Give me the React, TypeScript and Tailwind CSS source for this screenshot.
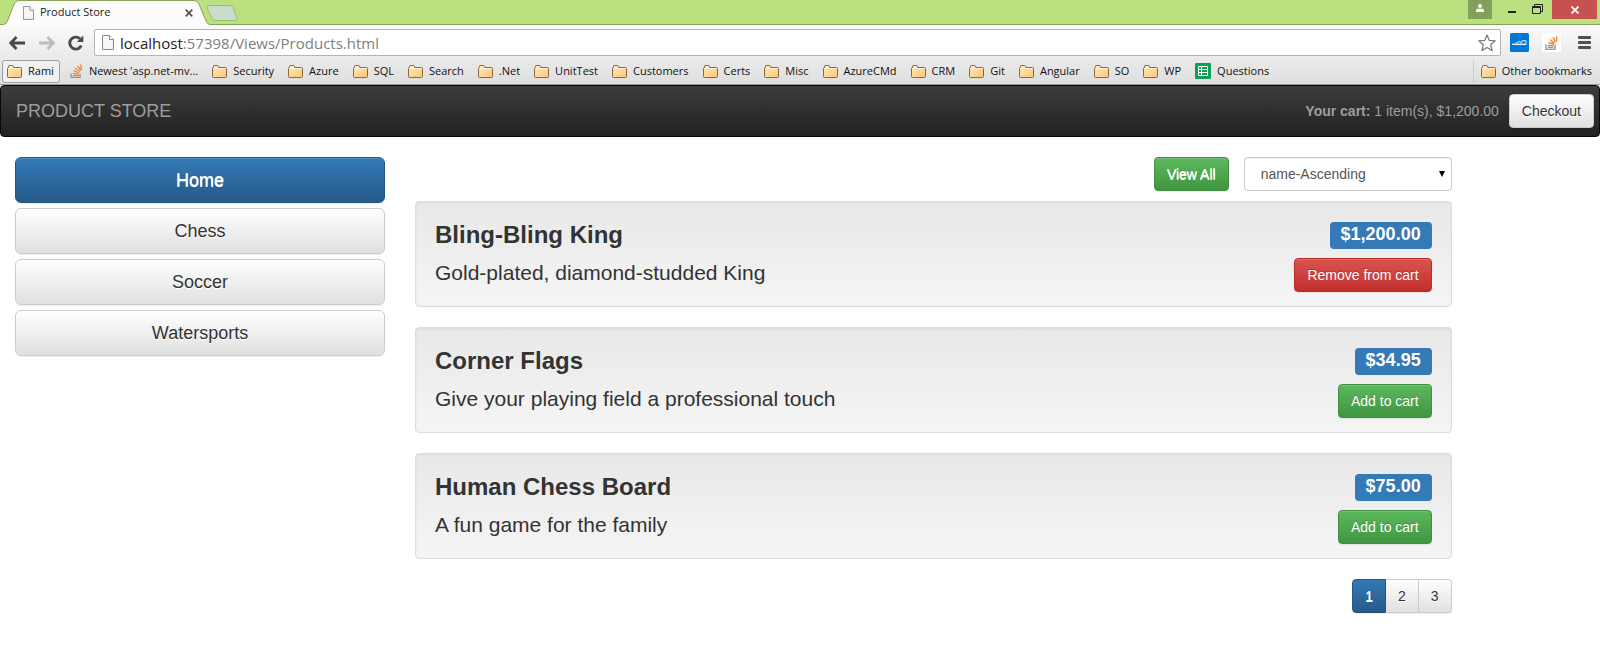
import type { ReactNode } from "react";

const folders = [
  "Security", "Azure", "SQL", "Search", ".Net", "UnitTest", "Customers", "Certs", "Misc",
  "AzureCMd", "CRM", "Git", "Angular", "SO", "WP",
];

const categories = ["Home", "Chess", "Soccer", "Watersports"];

const products = [
  { name: "Bling-Bling King", description: "Gold-plated, diamond-studded King", price: "$1,200.00", inCart: true },
  { name: "Corner Flags", description: "Give your playing field a professional touch", price: "$34.95", inCart: false },
  { name: "Human Chess Board", description: "A fun game for the family", price: "$75.00", inCart: false },
];

const raised = "shadow-[inset_0_1px_0_rgba(255,255,255,0.15),0_1px_1px_rgba(0,0,0,0.075)]";
const whiteShadow = "[text-shadow:0_1px_0_#fff]";
const darkShadow = "[text-shadow:0_-1px_0_rgba(0,0,0,0.2)]";
const neutral = `border-[#ccc] bg-linear-to-b from-white to-[#e0e0e0] text-[#333] ${whiteShadow}`;
const primary = `border-[#245580] bg-linear-to-b from-[#337ab7] to-[#265a88] text-white ${whiteShadow}`;
const success = "border-[#3e8f3e] bg-linear-to-b from-[#5cb85c] to-[#419641] text-white";
const danger = "border-[#b92c28] bg-linear-to-b from-[#d9534f] to-[#c12e2a] text-white";
const button = `h-[34px] shrink-0 rounded border px-3 text-sm leading-5 ${raised}`;

function PageIcon({ className }: { className: string }) {
  return (
    <svg viewBox="0 0 12 15" className={className} aria-hidden="true">
      <path d="M.5.5h7l4 4v10H.5z" fill="#f6f6f6" stroke="#8a8a8a" />
      <path d="M7.5.5v4h4" fill="#fff" stroke="#8a8a8a" />
    </svg>
  );
}

function FolderIcon() {
  return (
    <svg viewBox="0 0 15 13" className="h-[13px] w-[15px] shrink-0" aria-hidden="true">
      <defs>
        <linearGradient id="folder" x1="0" y1="0" x2="1" y2="1">
          <stop offset="0" stopColor="#ffebbd" />
          <stop offset="1" stopColor="#fcc673" />
        </linearGradient>
      </defs>
      <path d="M1.5 2.5V1.2Q1.5.5 2.2.5H5.6Q6.3.5 6.5 1.2L6.8 2.5H13.5Q14.5 2.5 14.5 3.5V11.5Q14.5 12.5 13.5 12.5H1.5Q.5 12.5.5 11.5V3.5Q.5 2.5 1.5 2.5Z" fill="url(#folder)" stroke="#8a6642" />
      <path d="M1.5 3.5H13.5" stroke="#fff4d8" />
    </svg>
  );
}

function StackIcon({ className }: { className: string }) {
  return (
    <svg viewBox="0 0 13 14" className={className} fill="none" aria-hidden="true">
      <path d="M1 9.500v4h9v-4" stroke="#919498" strokeWidth="1.300" />
      <g stroke="#f0802a" strokeWidth="1.200">
        <path d="M2.700 11.600H8.600M2.800 9.400l5.800.7M3.400 6.800l5.600 1.900M5 4.200l5 3.300M7.500 1.800l3.400 4.600M10.600.3l1 5.500" />
      </g>
    </svg>
  );
}

function SheetIcon() {
  return (
    <svg viewBox="0 0 16 16" className="size-4 shrink-0" aria-hidden="true">
      <rect width="16" height="16" rx="1" fill="#0f9d58" />
      <path d="M3.500 3.500h9v9h-9zM3.500 6.500h9M3.500 9.500h9M6.500 3.500v9" fill="none" stroke="#fff" />
    </svg>
  );
}

function Bookmark({ icon, children }: { icon: ReactNode; children: ReactNode }) {
  return (
    <a href="#" className="flex shrink-0 items-center gap-[6px] whitespace-nowrap">
      {icon}
      {children}
    </a>
  );
}

function TabStrip() {
  return (
    <div className="flex h-[25px] items-start border-b border-[#87a35a] bg-[#bbe07f]">
      <div className="relative h-[25px] w-[210px] shrink-0">
        <svg viewBox="0 0 210 25" className="absolute inset-0 h-[25px] w-[210px]" aria-hidden="true">
          <path d="M0 25V24.5H3Q6 24.500 7.500 21L14 4Q15.500.5 19 .5H194Q197.500.5 199 4L206 21Q207.500 24.500 210 24.500V25Z" fill="#fcfcfc" />
          <path d="M0 24.500H3Q6 24.500 7.500 21L14 4Q15.500.5 19 .5H194Q197.500.5 199 4L206 21Q207.500 24.500 210 24.500" fill="none" stroke="#87a35a" />
        </svg>
        <div className="relative flex h-[25px] items-center pr-[17px] pl-[23px] text-[11px] text-[#222]">
          <PageIcon className="h-[14px] w-[11px]" />
          <span className="ml-[6px]">Product Store</span>
          <button aria-label="Close tab" className="ml-auto">
            <svg viewBox="0 0 8 8" className="size-2" stroke="#555" strokeWidth="1.800" aria-hidden="true">
              <path d="M.7.7l6.600 6.600M7.300.7L.7 7.300" />
            </svg>
          </button>
        </div>
      </div>
      <button aria-label="New tab" className="-ml-1 pt-[5px]">
        <svg viewBox="0 0 32 16" className="h-4 w-8" aria-hidden="true">
          <path d="M2.500.5H24Q26 .5 27 2.500L31 13Q31.500 15.500 29.500 15.500H9Q7 15.500 6 13.500L1 2.500Q.6.5 2.500.5Z" fill="#cbdccb" stroke="#9bbd78" />
        </svg>
      </button>
      <div className="ml-auto flex h-[19px] items-stretch pr-[3px]">
        <button aria-label="User" className="flex w-6 justify-center bg-[#839f5a] pt-1">
          <svg viewBox="0 0 8 8" className="size-2" fill="#fff" aria-hidden="true">
            <circle cx="4" cy="2" r="2" />
            <path d="M0 8V6.500Q0 4.700 2 4.700H6Q8 4.700 8 6.500V8Z" />
          </svg>
        </button>
        <button aria-label="Minimize" className="flex w-10 items-end justify-center pb-[6px]">
          <span className="h-[2px] w-2 bg-[#222]" />
        </button>
        <button aria-label="Restore" className="flex w-5 justify-end pt-1">
          <svg viewBox="0 0 11 10" className="mr-[9px] h-[10px] w-[11px] shrink-0" fill="none" stroke="#222" aria-hidden="true">
            <path d="M2.500 2V.5H10.500V7.500H9" />
            <path d="M.5 2.500H8.500V9.500H.5Z" />
            <path d="M.5 3.500H8.500" />
          </svg>
        </button>
        <button aria-label="Close" className="flex w-[45px] items-center justify-center bg-[#c75050]">
          <svg viewBox="0 0 8 8" className="size-2" stroke="#fff" strokeWidth="1.700" aria-hidden="true">
            <path d="M.5.5l7 7M7.500.5l-7 7" />
          </svg>
        </button>
      </div>
    </div>
  );
}

function Toolbar() {
  return (
    <div className="flex items-center px-[9px] py-1">
      <button aria-label="Back">
        <svg viewBox="0 0 16 14" className="h-[14px] w-4" fill="none" stroke="#4a4a4a" strokeWidth="2.800" aria-hidden="true">
          <path d="M7.500 1L1.800 7l5.700 6M2 7H16" />
        </svg>
      </button>
      <button aria-label="Forward" className="ml-[14px]">
        <svg viewBox="0 0 16 14" className="h-[14px] w-4" fill="none" stroke="#bdbdbd" strokeWidth="2.800" aria-hidden="true">
          <path d="M8.500 1l5.700 6-5.700 6M0 7H14" />
        </svg>
      </button>
      <button aria-label="Reload" className="ml-[13px]">
        <svg viewBox="0 0 16 16" className="size-4" fill="none" aria-hidden="true">
          <path d="M13.300 10.500A6 6 0 1 1 12 3.800" stroke="#4a4a4a" strokeWidth="2.900" />
          <path d="M15.300 .6V7H8.800Z" fill="#4a4a4a" />
        </svg>
      </button>
      <div className="ml-[10px] flex h-[27px] grow items-center rounded-[2px] border border-[#b4b4b4] bg-white pr-1 pl-[7px]">
        <PageIcon className="h-[15px] w-3 shrink-0" />
        <div className="ml-[6px] grow text-[15px] leading-5 text-[#808080]">
          <span className="text-[#222]">localhost</span>:57398/Views/Products.html
        </div>
        <button aria-label="Bookmark this page">
          <svg viewBox="0 0 18 18" className="size-[18px]" fill="#fff" stroke="#777" strokeWidth="1.200" strokeLinejoin="round" aria-hidden="true">
            <path d="M9 1l2.300 5.400 5.900.5-4.500 3.900 1.400 5.800L9 13.500l-5.100 3.100 1.400-5.800L.8 6.900l5.900-.5Z" />
          </svg>
        </button>
      </div>
      <button aria-label="Azure extension" className="ml-[9px]">
        <svg viewBox="0 0 19 19" className="size-[19px]" fill="none" aria-hidden="true">
          <rect width="19" height="19" rx="1.500" fill="#0078d7" />
          <path d="M2 11.300H16.500" stroke="#e6f2fc" strokeWidth="1.500" />
          <path d="M6 10L10 8.300M10 10L13 7.700H15.500L16.300 10.500" stroke="#b5d8f5" strokeWidth="1.200" />
        </svg>
      </button>
      <button aria-label="Stack extension" className="ml-[13px] flex size-[19px] items-center justify-center bg-white">
        <svg viewBox="0 0 13 14" className="h-[14px] w-[13px]" fill="none" aria-hidden="true">
          <path d="M1 8.500v5h9v-5" stroke="#999" strokeWidth="1.500" />
          <path d="M2.800 11.500H8.500M2.800 9.500H8.500" stroke="#999" strokeWidth="1.300" />
          <path d="M3.500 6.500l5.500 1.700M5 3.500l4.500 3.700M8 1.200l2.500 5M11.600.5V5.500" stroke="#ee8223" strokeWidth="1.400" />
        </svg>
      </button>
      <button aria-label="Menu" className="ml-[17px] flex w-[13px] flex-col gap-[2px]">
        <span className="h-[3px] w-full rounded-[1px] bg-[#505050]" />
        <span className="h-[3px] w-full rounded-[1px] bg-[#505050]" />
        <span className="h-[3px] w-full rounded-[1px] bg-[#505050]" />
      </button>
    </div>
  );
}

function BookmarksBar() {
  return (
    <div className="flex h-6 items-center pr-2 pb-[2px] pl-[2px] text-[11px] text-[#111]">
      <div className="mr-[10px] flex h-[23px] items-center rounded-[3px] border border-[#a0a0a0] bg-[#f0f0f0] pr-[5px] pl-1">
        <Bookmark icon={<FolderIcon />}>Rami</Bookmark>
      </div>
      <div className="flex items-center gap-[14px]">
        <Bookmark icon={<StackIcon className="h-[14px] w-[13px]" />}>Newest &apos;asp.net-mv...</Bookmark>
        {folders.map((name) => (
          <Bookmark key={name} icon={<FolderIcon />}>{name}</Bookmark>
        ))}
        <Bookmark icon={<SheetIcon />}>Questions</Bookmark>
      </div>
      <div className="ml-auto flex h-[22px] items-center border-l border-[#c3cdd8] pl-[7px]">
        <Bookmark icon={<FolderIcon />}>Other bookmarks</Bookmark>
      </div>
    </div>
  );
}

export default function App() {
  return (
    <div className="min-h-screen bg-white font-['Liberation_Sans',Arial,sans-serif] text-[#333]">
      <div className="border-b border-[#9a9a9a] bg-[#dfdfdf] font-['Open_Sans',sans-serif]">
        <TabStrip />
        <div className="bg-linear-to-b from-[#fafafa] to-[#dedede]">
          <Toolbar />
          <BookmarksBar />
        </div>
      </div>

      <header className="flex h-[52px] items-center rounded border border-[#080808] bg-linear-to-b from-[#3c3c3c] to-[#222] pr-[5px] pl-[15px] text-[#9d9d9d]">
        <a href="#" className="text-lg leading-5">PRODUCT STORE</a>
        <p className="ml-auto text-sm leading-5"><strong>Your cart:</strong> 1 item(s), $1,200.00</p>
        <button className={`${button} ${neutral} ml-[10px]`}>Checkout</button>
      </header>

      <main className="flex pt-5">
        <nav className="flex w-1/4 flex-col gap-[5px] px-[15px]">
          {categories.map((name, i) => (
            <a
              key={name}
              href="#"
              className={`flex h-[46px] items-center justify-center rounded-md border text-lg ${raised} ${i === 0 ? primary : neutral}`}
            >
              {name}
            </a>
          ))}
        </nav>

        <section className="w-2/3 px-[15px]">
          <div className="mb-[10px] flex justify-end gap-[15px]">
            <button className={`${button} ${success} ${whiteShadow}`}>View All</button>
            <div className="relative w-52">
              <select
                aria-label="Sort products"
                className="h-[34px] w-full appearance-none rounded border border-[#ccc] bg-white px-4 text-sm text-[#555] shadow-[inset_0_1px_1px_rgba(0,0,0,0.075)]"
              >
                <option>name-Ascending</option>
              </select>
              <svg viewBox="0 0 6 6" className="pointer-events-none absolute top-[14px] right-[7px] size-[6px]" aria-hidden="true">
                <path d="M0 0H6L3 6Z" fill="#000" />
              </svg>
            </div>
          </div>

          {products.map((product) => (
            <article
              key={product.name}
              className="mb-5 flex justify-between rounded border border-[#dcdcdc] bg-linear-to-b from-[#e8e8e8] to-[#f5f5f5] px-[19px] pt-5 shadow-[inset_0_1px_3px_rgba(0,0,0,0.05),0_1px_0_rgba(255,255,255,0.1)]"
            >
              <div className="pb-[19px]">
                <h3 className="text-2xl leading-[26px] font-bold">{product.name}</h3>
                <p className="mt-[11px] text-[21px] leading-7">{product.description}</p>
              </div>
              <div className="flex flex-col items-end gap-[9px]">
                <span className="rounded bg-[#337ab7] px-[11px] pt-[3px] pb-[6px] text-lg leading-[18px] font-bold text-white">
                  {product.price}
                </span>
                <button className={`${button} ${product.inCart ? danger : success} ${darkShadow}`}>
                  {product.inCart ? "Remove from cart" : "Add to cart"}
                </button>
              </div>
            </article>
          ))}

          <div className={`ml-auto flex w-fit rounded ${raised}`}>
            <button className={`h-[34px] rounded-l border px-3 text-sm leading-5 ${primary}`}>1</button>
            <button className={`h-[34px] border-y border-r px-3 text-sm leading-5 ${neutral}`}>2</button>
            <button className={`h-[34px] rounded-r border-y border-r px-3 text-sm leading-5 ${neutral}`}>3</button>
          </div>
        </section>
      </main>
    </div>
  );
}
